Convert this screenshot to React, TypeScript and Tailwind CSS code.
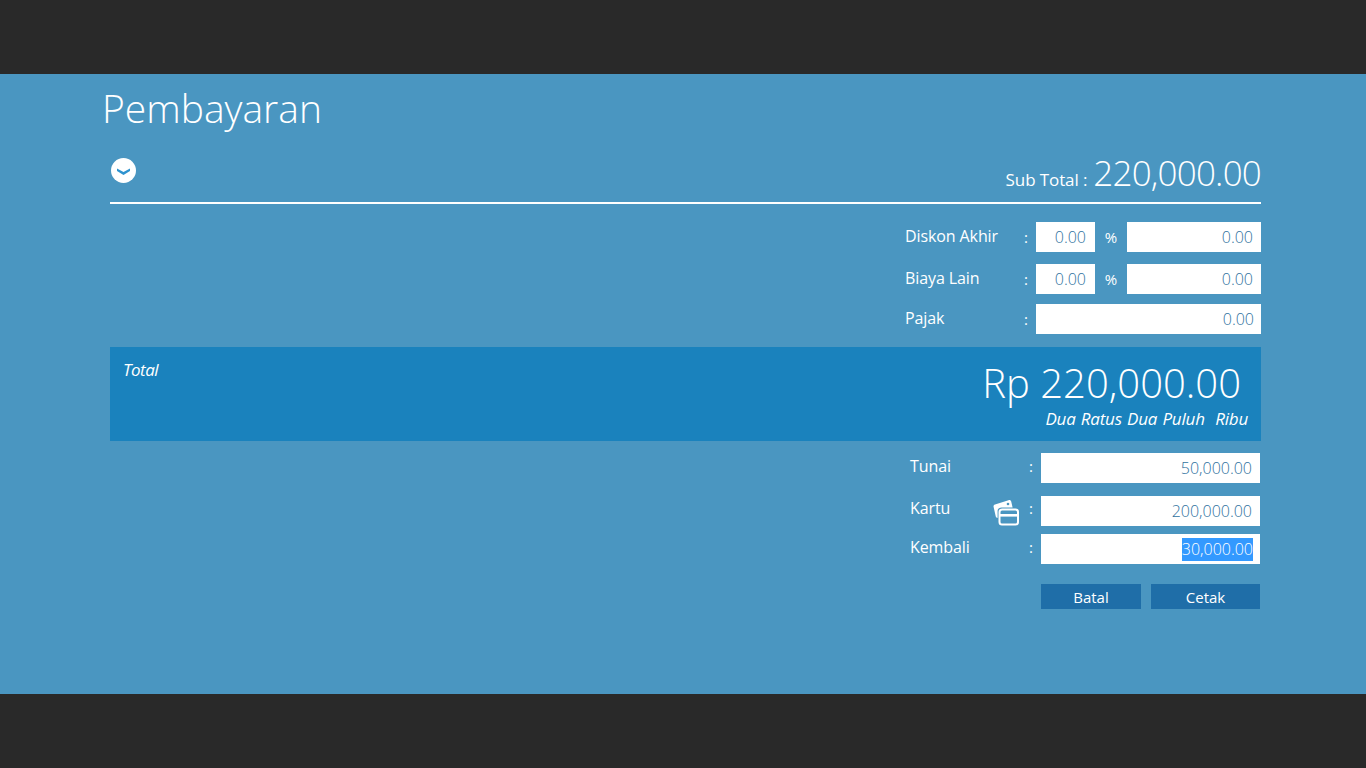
const font = { fontFamily: '"Open Sans", "Noto Sans", sans-serif' };

function Field({ value, className }: { value: string; className: string }) {
  return (
    <div className={`flex h-[30px] shrink-0 items-center justify-end bg-white text-[16px] font-light text-[#2f72a0] ${className}`}>
      {value}
    </div>
  );
}

function Colon({ className = "" }: { className?: string }) {
  return <span className={`shrink-0 text-[15px] leading-none text-white ${className}`}>:</span>;
}

function PercentRow({ label, mt }: { label: string; mt: string }) {
  return (
    <div className={`flex items-center ${mt}`}>
      <span className="w-[119px] shrink-0 pb-[2px] text-[16px] tracking-[-0.1px] text-white">{label}</span>
      <Colon className="w-[12px]" />
      <Field value="0.00" className="w-[59px] pr-[9px]" />
      <span className="w-[32px] shrink-0 text-center text-[15px] text-white">%</span>
      <Field value="0.00" className="w-[134px] pr-[8px]" />
    </div>
  );
}

function PayRow({ label, value, mt, icon, selected }: { label: string; value: string; mt: string; icon?: boolean; selected?: boolean }) {
  return (
    <div className={`flex items-center ${mt}`}>
      <span className="w-[82px] shrink-0 pl-[9px] pb-[5px] text-[16px] tracking-[-0.1px] text-white">{label}</span>
      <span className="flex w-[36px] shrink-0 justify-end pt-[4px]">
        {icon && (
          <svg width="26" height="27" viewBox="0 0 26 27" fill="none">
            <path d="M0.5 7.5 C0.5 6.4 1 5.9 2 5.5 L15.5 1.2 C17 0.9 17.8 1.4 18.2 2.6 L19.6 8.5 L8.5 8.5 C6 8.5 4.6 10 4.6 12 L4.6 19 L4 18.8 C3.2 18.5 2.9 18 2.7 17.2 Z" fill="#fff" />
            <rect x="6.5" y="10.5" width="18.5" height="15" rx="2.5" stroke="#fff" strokeWidth="2" />
            <rect x="6.5" y="15" width="18.5" height="2.6" fill="#fff" />
            <circle cx="15" cy="5" r="1.3" fill="#4a96c1" />
          </svg>
        )}
      </span>
      <Colon className="w-[22px] pl-[10px] pb-[4px]" />
      {selected ? (
        <div className="flex h-[30px] w-[219px] shrink-0 items-center justify-end bg-white pr-[7px]">
          <span className="bg-[#3399ff] text-[16px] leading-[23px] font-light text-white">{value}</span>
        </div>
      ) : (
        <Field value={value} className="w-[219px] pr-[8px]" />
      )}
    </div>
  );
}

export default function App() {
  return (
    <div className="flex h-[768px] flex-col bg-[#292929]" style={font}>
      <div className="h-[74px]" />
      <main className="h-[620px] bg-[#4a96c1] pl-[110px] pr-[105px]">
        <h1 className="-ml-[8px] pt-[8px] text-[39px] leading-[52px] font-light text-white">Pembayaran</h1>

        <div className="mt-[12px] flex h-[58px] items-start justify-between border-b-2 border-white">
          <svg className="mt-[12px] ml-[1px]" width="25" height="25" viewBox="0 0 25 25">
            <circle cx="12.5" cy="12.5" r="12.5" fill="#fff" />
            <path d="M6 10.5 L12.5 14 L19 10.5 L19 13 L12.5 17 L6 13 Z" fill="#2f93cf" />
          </svg>
          <div className="flex items-baseline gap-[6px] pt-[5px]">
            <span className="text-[17px] tracking-[-0.1px] text-white">Sub Total :</span>
            <span className="text-[35px] leading-[44px] font-light tracking-[-0.8px] text-white">220,000.00</span>
          </div>
        </div>

        <div className="ml-auto w-[356px]">
          <PercentRow label="Diskon Akhir" mt="mt-[18px]" />
          <PercentRow label="Biaya Lain" mt="mt-[12px]" />
          <div className="mt-[10px] flex items-center">
            <span className="w-[119px] shrink-0 pb-[2px] text-[16px] tracking-[-0.1px] text-white">Pajak</span>
            <Colon className="w-[12px]" />
            <Field value="0.00" className="w-[225px] pr-[7px]" />
          </div>
        </div>

        <section className="mt-[13px] flex h-[94px] justify-between bg-[#1a82bd] px-[13px] text-white">
          <span className="pt-[12px] text-[17px] leading-[22px] italic tracking-[-0.5px]">Total</span>
          <div className="flex flex-col items-end">
            <span className="pt-[10px] pr-[7px] text-[40px] leading-[52px] font-light">Rp 220,000.00</span>
            <span className="text-[17px] leading-[20px] italic tracking-[-0.2px] [word-spacing:1px]">Dua Ratus Dua Puluh&nbsp; Ribu</span>
          </div>
        </section>

        <div className="ml-auto w-[360px] pr-[1px]">
          <PayRow label="Tunai" value="50,000.00" mt="mt-[12px]" />
          <PayRow label="Kartu" value="200,000.00" mt="mt-[12px]" icon />
          <PayRow label="Kembali" value="30,000.00" mt="mt-[8px]" selected />
          <div className="mt-[20px] flex justify-end gap-[10px]">
            <button className="h-[25px] w-[100px] bg-[#1f6ea8] pt-[1px] text-[15px] text-white">Batal</button>
            <button className="h-[25px] w-[109px] bg-[#1f6ea8] pt-[1px] text-[15px] text-white">Cetak</button>
          </div>
        </div>
      </main>
      <div className="h-[74px]" />
    </div>
  );
}
